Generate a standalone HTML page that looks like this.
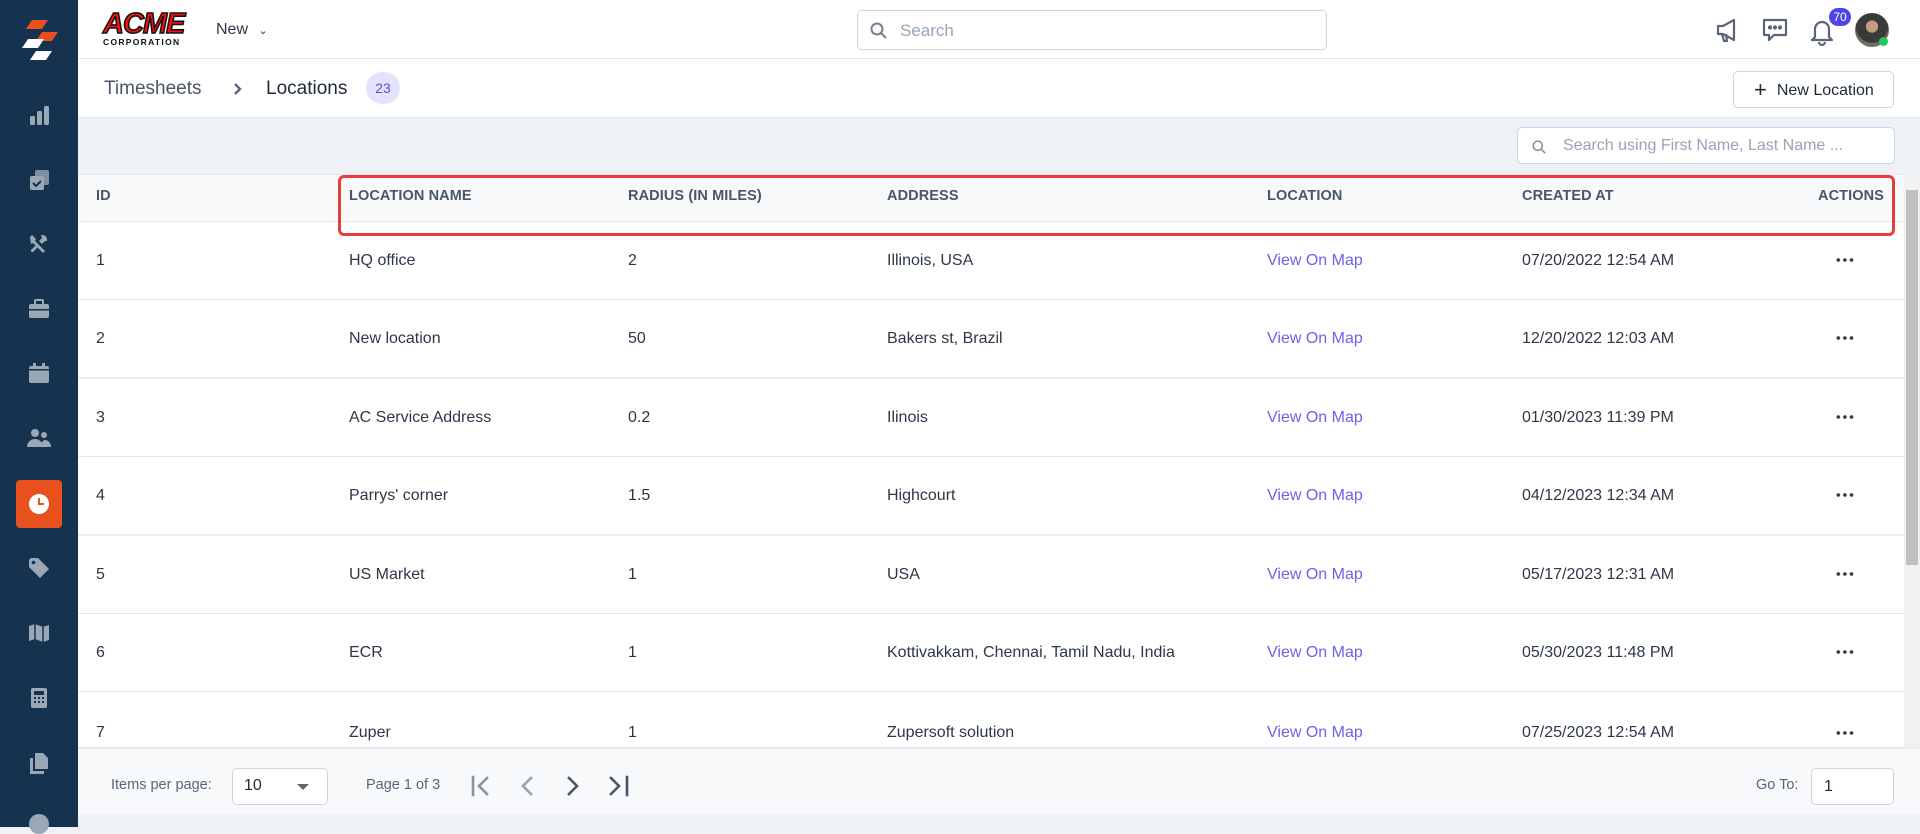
<!DOCTYPE html>
<html><head><meta charset="utf-8"><style>
*{box-sizing:border-box;margin:0;padding:0}
body{width:1920px;height:827px;overflow:hidden;font-family:"Liberation Sans",Arial,sans-serif;background:#eef1f5;position:relative;color:#1f2a37}
.abs{position:absolute}
#side{left:0;top:0;width:78px;height:827px;background:#15334e}
.si{position:absolute;left:27px;width:24px;height:24px}
#top{left:78px;top:0;width:1842px;height:59px;background:#fff;border-bottom:1px solid #e2e8f0}
#bc{left:78px;top:59px;width:1842px;height:59px;background:#fff;border-bottom:1px solid #dde3ea}
.th{position:absolute;top:188px;font-size:14.5px;font-weight:bold;color:#4a5568;letter-spacing:.1px}
.row{position:absolute;left:78px;width:1826px;height:78px;background:#fff;border-bottom:1px solid #e5e9ef}
.c{position:absolute;top:30px;font-size:16px;color:#2d3748}
.lk{color:#6b63e8}
.dots{position:absolute;left:1757px;top:36px;width:20px;height:4px;background:radial-gradient(circle,#2d3748 1.6px,transparent 2px) 0 0/6.6px 4px repeat-x}
</style></head><body>
<div id="side" class="abs">
<svg class="abs" style="left:16px;top:20px" width="46" height="44" viewBox="0 0 46 44"><polygon points="16,0 32,0 26,9 10,9" fill="#e8501e"/><polygon points="26,12 42,12 36,21 20,21" fill="#e8501e"/><polygon points="12,19 28,19 22,28 6,28" fill="#fff"/><polygon points="20,31 36,31 30,40 14,40" fill="#fff"/></svg>
<svg class="si" style="top:103px" viewBox="0 0 24 24" fill="#9aa8b6"><rect x="3" y="13" width="5" height="9" rx="1.5"/><rect x="10" y="8" width="5" height="14" rx="1.5"/><rect x="17" y="3" width="5" height="19" rx="1.5"/></svg>
<svg class="si" style="top:168px" viewBox="0 0 24 24" fill="#9aa8b6"><rect x="8" y="2" width="14" height="15" rx="2" opacity=".8"/><rect x="3" y="8" width="14" height="14" rx="2"/><path d="M6 15l3 3 5-5" stroke="#15334e" stroke-width="2" fill="none"/></svg>
<svg class="si" style="top:232px" viewBox="0 0 24 24" fill="#9aa8b6"><path d="M3 5l2-2 4 4-1 2 10 10-2 2L6 11l-2 1z"/><path d="M14 3a5 5 0 016 6l-2 0-3 3-3-3 3-3z" /><path d="M4 18l6-6 2 2-6 6a1.5 1.5 0 01-2-2z"/></svg>
<svg class="si" style="top:297px" viewBox="0 0 24 24" fill="#9aa8b6"><rect x="2" y="7" width="20" height="14" rx="2"/><rect x="8" y="3" width="8" height="5" rx="1" fill="none" stroke="#9aa8b6" stroke-width="2"/><rect x="2" y="12" width="20" height="1.5" fill="#15334e"/></svg>
<svg class="si" style="top:361px" viewBox="0 0 24 24" fill="#9aa8b6"><rect x="2" y="5" width="20" height="17" rx="2"/><rect x="6" y="2" width="3" height="5"/><rect x="15" y="2" width="3" height="5"/><rect x="2" y="8" width="20" height="1.5" fill="#15334e"/></svg>
<svg class="si" style="top:426px" viewBox="0 0 24 24" fill="#9aa8b6"><circle cx="8" cy="7" r="4"/><path d="M0 21c0-5 4-8 8-8s8 3 8 8z"/><circle cx="17" cy="9" r="3"/><path d="M14 21c0-4 2-7 4-7s6 2 6 7z"/></svg>
<div class="abs" style="left:16px;top:480px;width:46px;height:48px;background:#e8501e;border-radius:4px"></div>
<svg class="si" style="top:492px" viewBox="0 0 24 24"><circle cx="12" cy="12" r="10" fill="#fff"/><path d="M12 6v6h5" stroke="#e8501e" stroke-width="2" fill="none"/></svg>
<svg class="si" style="top:556px" viewBox="0 0 24 24" fill="#9aa8b6"><path d="M2 4v7l11 11 9-9L11 2H4z"/><circle cx="6.5" cy="6.5" r="1.8" fill="#15334e"/></svg>
<svg class="si" style="top:621px" viewBox="0 0 24 24" fill="#9aa8b6"><path d="M2 5l6-2 8 3 6-2v15l-6 2-8-3-6 2z"/><path d="M8 3v16M16 6v16" stroke="#15334e" stroke-width="1.5"/></svg>
<svg class="si" style="top:686px" viewBox="0 0 24 24" fill="#9aa8b6"><rect x="4" y="2" width="16" height="20" rx="2"/><rect x="7" y="5" width="10" height="4" fill="#15334e"/><g fill="#15334e"><rect x="7" y="11" width="2" height="2"/><rect x="11" y="11" width="2" height="2"/><rect x="15" y="11" width="2" height="2"/><rect x="7" y="15" width="2" height="2"/><rect x="11" y="15" width="2" height="2"/><rect x="15" y="15" width="2" height="2"/></g></svg>
<svg class="si" style="top:751px" viewBox="0 0 24 24" fill="#9aa8b6"><path d="M8 2h8l5 5v11H8z"/><path d="M3 7h3v13h11v3H3z"/></svg>
<svg class="si" style="top:810px" viewBox="0 0 24 24" fill="#9aa8b6"><circle cx="12" cy="14" r="10"/></svg>
</div>
<div id="top" class="abs">
<div class="abs" style="left:25px;top:11px;width:88px;height:38px">
<div style="font:italic 900 29px/27px 'Liberation Sans',sans-serif;color:#e11;-webkit-text-stroke:1.5px #111;letter-spacing:-1px">ACME</div>
<div style="font:bold 8.5px/9px 'Liberation Sans',sans-serif;color:#111;letter-spacing:1.3px">CORPORATION</div></div>
<div class="abs" style="left:138px;top:21px;font-size:16px;color:#2d3748">New <span style="font-size:11px;margin-left:6px">&#8964;</span></div>
<div class="abs" style="left:779px;top:10px;width:470px;height:40px;border:1px solid #cbd5e0;border-radius:5px">
<svg class="abs" style="left:12px;top:11px" width="17" height="17" viewBox="0 0 17 17" fill="none" stroke="#718096" stroke-width="2"><circle cx="7" cy="7" r="5.5"/><path d="M11 11l5 5"/></svg>
<div class="abs" style="left:42px;top:10px;font-size:17px;color:#97a3b6">Search</div></div>
<svg class="abs" style="left:1636px;top:16px" width="28" height="28" viewBox="0 0 28 28" fill="none" stroke="#5a6678" stroke-width="2.2" stroke-linejoin="round"><path d="M4 10h5l11-6v20l-11-6H4z"/><path d="M8 18l2 7h3l-1-7"/></svg>
<svg class="abs" style="left:1683px;top:16px" width="28" height="28" viewBox="0 0 28 28" fill="none" stroke="#5a6678" stroke-width="2.2" stroke-linejoin="round"><path d="M3 4h22v15H13l-5 5v-5H3z"/><circle cx="9" cy="11.5" r="1" fill="#5a6678"/><circle cx="14" cy="11.5" r="1" fill="#5a6678"/><circle cx="19" cy="11.5" r="1" fill="#5a6678"/></svg>
<svg class="abs" style="left:1730px;top:16px" width="28" height="30" viewBox="0 0 28 30" fill="none" stroke="#5a6678" stroke-width="2.2" stroke-linejoin="round"><path d="M7 21V13a7 7 0 0114 0v8l3 3H4z"/><path d="M11 26a3 3 0 006 0"/></svg>
<div class="abs" style="left:1751px;top:8px;width:22px;height:18px;border-radius:9px;background:#4f46e5;color:#fff;font-size:12px;text-align:center;line-height:18px">70</div>
<div class="abs" style="left:1777px;top:13px;width:34px;height:34px;border-radius:50%;background:radial-gradient(circle at 50% 40%,#c89a80 0 22%,#3a3a38 24% 60%,#6c6f66 62%)"></div>
<div class="abs" style="left:1801px;top:37px;width:9px;height:9px;border-radius:50%;background:#22c55e"></div>
</div>
<div id="bc" class="abs">
<div class="abs" style="left:26px;top:19px;font-size:19px;color:#4a5568">Timesheets</div>
<svg class="abs" style="left:154px;top:23px" width="12" height="14" viewBox="0 0 12 14" fill="none" stroke="#5a6678" stroke-width="2.4"><path d="M3 2l5 5-5 5"/></svg>
<div class="abs" style="left:188px;top:19px;font-size:19px;color:#1f2a37">Locations</div>
<div class="abs" style="left:288px;top:13px;width:34px;height:32px;border-radius:16px;background:#e5e3fb;color:#5b4fd6;font-size:14px;text-align:center;line-height:32px">23</div>
<div class="abs" style="left:1655px;top:12px;width:161px;height:37px;border:1px solid #cbd5e0;border-radius:5px;font-size:16px;color:#1f2a37;line-height:35px;padding-left:20px"><span style="font-size:22px;vertical-align:-2px;margin-right:10px">+</span>New Location</div>
</div>
<div class="abs" style="left:1517px;top:127px;width:378px;height:37px;background:#fff;border:1px solid #cbd5e0;border-radius:5px">
<svg class="abs" style="left:14px;top:12px" width="14" height="14" viewBox="0 0 17 17" fill="none" stroke="#8794a6" stroke-width="2"><circle cx="7" cy="7" r="5.5"/><path d="M11 11l5 5"/></svg>
<div class="abs" style="left:45px;top:9px;font-size:16px;color:#97a3b6">Search using First Name, Last Name ...</div></div>
<div class="abs" style="left:78px;top:174px;width:1826px;height:48px;background:#f7f9fb;border-top:1px solid #e2e8f0;border-bottom:1px solid #e2e8f0"></div>
<div class="th" style="left:96px">ID</div>
<div class="th" style="left:349px">LOCATION NAME</div>
<div class="th" style="left:628px">RADIUS (IN MILES)</div>
<div class="th" style="left:887px">ADDRESS</div>
<div class="th" style="left:1267px">LOCATION</div>
<div class="th" style="left:1522px">CREATED AT</div>
<div class="th" style="left:1818px">ACTIONS</div>
<div class="row" style="top:222px"><div class="c" style="left:18px">1</div><div class="c" style="left:271px">HQ office</div><div class="c" style="left:550px">2</div><div class="c" style="left:809px">Illinois, USA</div><div class="c lk" style="left:1189px">View On Map</div><div class="c" style="left:1444px">07/20/2022 12:54 AM</div><div class="dots"></div></div>
<div class="row" style="top:300px"><div class="c" style="left:18px">2</div><div class="c" style="left:271px">New location</div><div class="c" style="left:550px">50</div><div class="c" style="left:809px">Bakers st, Brazil</div><div class="c lk" style="left:1189px">View On Map</div><div class="c" style="left:1444px">12/20/2022 12:03 AM</div><div class="dots"></div></div>
<div class="row" style="top:379px"><div class="c" style="left:18px">3</div><div class="c" style="left:271px">AC Service Address</div><div class="c" style="left:550px">0.2</div><div class="c" style="left:809px">Ilinois</div><div class="c lk" style="left:1189px">View On Map</div><div class="c" style="left:1444px">01/30/2023 11:39 PM</div><div class="dots"></div></div>
<div class="row" style="top:457px"><div class="c" style="left:18px">4</div><div class="c" style="left:271px">Parrys' corner</div><div class="c" style="left:550px">1.5</div><div class="c" style="left:809px">Highcourt</div><div class="c lk" style="left:1189px">View On Map</div><div class="c" style="left:1444px">04/12/2023 12:34 AM</div><div class="dots"></div></div>
<div class="row" style="top:536px"><div class="c" style="left:18px">5</div><div class="c" style="left:271px">US Market</div><div class="c" style="left:550px">1</div><div class="c" style="left:809px">USA</div><div class="c lk" style="left:1189px">View On Map</div><div class="c" style="left:1444px">05/17/2023 12:31 AM</div><div class="dots"></div></div>
<div class="row" style="top:614px"><div class="c" style="left:18px">6</div><div class="c" style="left:271px">ECR</div><div class="c" style="left:550px">1</div><div class="c" style="left:809px">Kottivakkam, Chennai, Tamil Nadu, India</div><div class="c lk" style="left:1189px">View On Map</div><div class="c" style="left:1444px">05/30/2023 11:48 PM</div><div class="dots"></div></div>
<div class="row" style="top:692px;height:56px"><div class="c" style="left:18px;top:32px">7</div><div class="c" style="left:271px;top:32px">Zuper</div><div class="c" style="left:550px;top:32px">1</div><div class="c" style="left:809px;top:32px">Zupersoft solution</div><div class="c lk" style="left:1189px;top:32px">View On Map</div><div class="c" style="left:1444px;top:32px">07/25/2023 12:54 AM</div><div class="dots" style="top:39px"></div></div>
<div class="abs" style="left:1904px;top:174px;width:16px;height:574px;background:#f1f1f1"></div>
<div class="abs" style="left:1906px;top:190px;width:12px;height:375px;background:#c1c1c1"></div>
<div class="abs" style="left:338px;top:175px;width:1557px;height:61px;border:3.5px solid #e53e3e;border-radius:6px"></div>
<div class="abs" style="left:78px;top:748px;width:1842px;height:66px;background:#f7f9fb;border-top:1px solid #e2e8f0">
<div class="abs" style="left:33px;top:28px;font-size:14.5px;color:#5a6678">Items per page:</div>
<div class="abs" style="left:154px;top:19px;width:96px;height:37px;background:#fff;border:1px solid #cbd5e0;border-radius:5px"><div class="abs" style="left:11px;top:8px;font-size:16px;color:#1f2a37">10</div><div class="abs" style="left:64px;top:15px;border-left:6px solid transparent;border-right:6px solid transparent;border-top:6px solid #5a6678"></div></div>
<div class="abs" style="left:288px;top:28px;font-size:14.5px;color:#5a6678">Page 1 of 3</div>
<svg class="abs" style="left:393px;top:26px" width="160" height="22" viewBox="0 0 160 22" fill="none" stroke-width="2.6" stroke-linecap="square"><path d="M2 2v18M16 3l-8 8 8 8" stroke="#8794a6"/><path d="M60 3l-8 8 8 8" stroke="#97a3b6"/><path d="M98 3l8 8-8 8" stroke="#4a5568"/><path d="M140 3l8 8-8 8M156 2v18" stroke="#4a5568"/></svg>
<div class="abs" style="left:1678px;top:28px;font-size:14.5px;color:#5a6678">Go To:</div>
<div class="abs" style="left:1733px;top:19px;width:83px;height:37px;background:#fff;border:1px solid #cbd5e0;border-radius:5px;font-size:16px;line-height:35px;padding-left:12px">1</div>
</div>
</body></html>
